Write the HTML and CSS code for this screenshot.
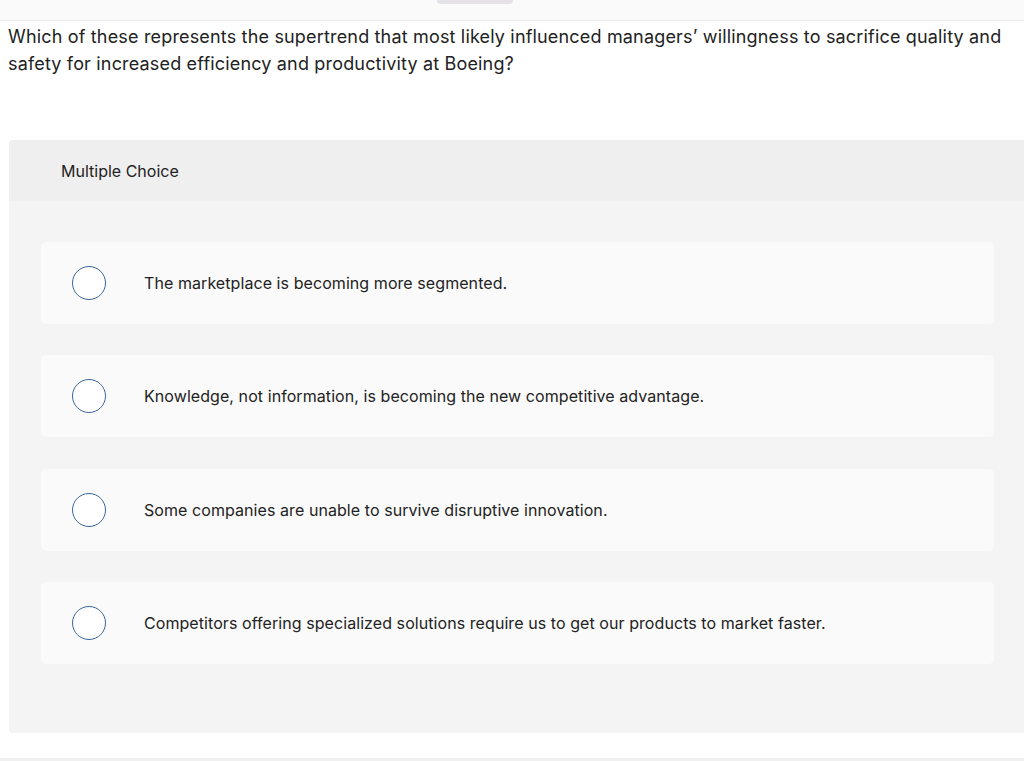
FILE: index.html
```html
<!DOCTYPE html>
<html>
<head>
<meta charset="utf-8">
<link rel="stylesheet" href="styles.css">
</head>
<body>
<div class="topbar"><span class="tab"></span></div>
<p class="question">Which of these represents the supertrend that most likely influenced managers’ willingness to sacrifice quality and safety for increased efficiency and productivity at Boeing?</p>
<section class="panel">
  <div class="panel-head">Multiple Choice</div>
  <div class="options">
    <div class="option"><span class="radio"></span><span class="label">The marketplace is becoming more segmented.</span></div>
    <div class="option"><span class="radio"></span><span class="label">Knowledge, not information, is becoming the new competitive advantage.</span></div>
    <div class="option"><span class="radio"></span><span class="label">Some companies are unable to survive disruptive innovation.</span></div>
    <div class="option"><span class="radio"></span><span class="label">Competitors offering specialized solutions require us to get our products to market faster.</span></div>
  </div>
</section>
<div class="footer"></div>
</body>
</html>
```
FILE: styles.css
```css
html, body { margin: 0; padding: 0; background: #fff; }
body { font-family: "Inter", "Liberation Sans", sans-serif; color: #222; height: 761px; overflow: hidden; }
.topbar { height: 20px; background: #fafafa; border-bottom: 1px solid #ececec; position: relative; }
.tab { position: absolute; left: 437px; top: 0; width: 76px; height: 4px; background: #e4e2e6; border-radius: 0 0 10px 10px; }
.question { margin: 0; padding: 2px 10px 0 8px; font-size: 18px; line-height: 27px; color: #222; letter-spacing: 0.17px; }
.panel { margin: 63px 0 0 9px; background: #f4f4f4; border-radius: 4px 0 0 4px; height: 593px; }
.panel-head { height: 61px; background: #efefef; border-radius: 4px 0 0 0; display: flex; align-items: center; padding-left: 52px; font-size: 16px; color: #222; }
.options { display: flex; flex-direction: column; gap: 31.4px; padding: 41px 30px 0 32px; }
.option { height: 82px; background: #fafafa; border-radius: 5px; display: flex; align-items: center; }
.radio { width: 34px; height: 34px; box-sizing: border-box; border: 1.5px solid #3a6697; border-radius: 50%; background: #fff; margin-left: 31px; flex: none; }
.label { margin-left: 38px; font-size: 16px; color: #222; letter-spacing: 0.07px; }
.footer { position: absolute; left: 0; right: 0; top: 758px; height: 3px; background: #f0f0f0; }
```
